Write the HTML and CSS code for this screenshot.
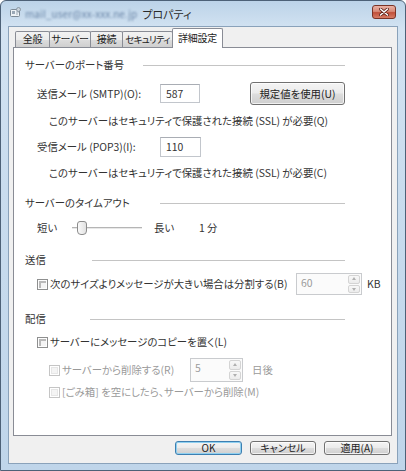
FILE: index.html
```html
<!DOCTYPE html>
<html lang="ja">
<head>
<meta charset="utf-8">
<title>プロパティ</title>
<link rel="stylesheet" href="styles.css">
</head>
<body>
<div class="window">
  <div class="titlebar">
    <svg class="app-icon" width="11" height="11" viewBox="0 0 11 11">
      <rect x="0.5" y="2.5" width="9" height="7" rx="1" fill="#eef2f5" stroke="#7d8a96"/>
      <rect x="2" y="4" width="3" height="3" fill="#9aa8b6"/>
      <rect x="6" y="4.5" width="3" height="1" fill="#9aa8b6"/>
      <rect x="6" y="6.5" width="2" height="1" fill="#9aa8b6"/>
      <circle cx="8.5" cy="2.5" r="2" fill="#c9d3dc" stroke="#7d8a96" stroke-width="0.8"/>
    </svg>
    <span class="title-blur">mail_user@xx-xxx.ne.jp</span>
    <span class="title-text">プロパティ</span>
    <span class="close-btn">
      <svg width="10" height="8" viewBox="0 0 10 8">
        <path d="M1.5 1 L8.5 7 M8.5 1 L1.5 7" stroke="#5a1e14" stroke-width="3" stroke-linecap="round"/>
        <path d="M1.5 1 L8.5 7 M8.5 1 L1.5 7" stroke="#ffffff" stroke-width="1.6" stroke-linecap="round"/>
      </svg>
    </span>
  </div>
  <div class="client">
    <div class="tabs">
      <div class="tab tab-general">全般</div>
      <div class="tab tab-server">サーバー</div>
      <div class="tab tab-conn">接続</div>
      <div class="tab tab-sec">セキュリティ</div>
      <div class="tab tab-adv active">詳細設定</div>
    </div>
    <div class="panel">
      <div class="group-head gh-port"><span class="gh-label">サーバーのポート番号</span><span class="gh-line"></span></div>
      <div class="row row-smtp">
        <span class="field-label">送信メール (SMTP)(O):</span>
        <span class="textbox tb-smtp">587</span>
        <span class="btn btn-port">規定値を使用(U)</span>
      </div>
      <div class="row row-ssl row-ssl-q">このサーバーはセキュリティで保護された接続 (SSL) が必要(Q)</div>
      <div class="row row-pop">
        <span class="field-label">受信メール (POP3)(I):</span>
        <span class="textbox tb-pop">110</span>
      </div>
      <div class="row row-ssl row-ssl-c">このサーバーはセキュリティで保護された接続 (SSL) が必要(C)</div>

      <div class="group-head gh-timeout"><span class="gh-label">サーバーのタイムアウト</span><span class="gh-line"></span></div>
      <div class="row row-slider">
        <span class="sl-short">短い</span>
        <span class="slider"><span class="sl-track"></span><span class="sl-thumb"></span></span>
        <span class="sl-long">長い</span>
        <span class="sl-value">1 分</span>
      </div>

      <div class="group-head gh-send"><span class="gh-label">送信</span><span class="gh-line"></span></div>
      <div class="row row-split">
        <span class="checkbox"></span>
        <span class="split-label">次のサイズよりメッセージが大きい場合は分割する(B)</span>
        <span class="spin spin-kb"><span class="spin-val">60</span><span class="spin-btns"><span class="spin-up"></span><span class="spin-down"></span></span></span>
        <span class="unit-kb">KB</span>
      </div>

      <div class="group-head gh-deliver"><span class="gh-label">配信</span><span class="gh-line"></span></div>
      <div class="row row-copy">
        <span class="checkbox"></span>
        <span>サーバーにメッセージのコピーを置く(L)</span>
      </div>
      <div class="row row-delete disabled">
        <span class="checkbox off"></span>
        <span class="delete-label">サーバーから削除する(R)</span>
        <span class="spin spin-days"><span class="spin-val">5</span><span class="spin-btns"><span class="spin-up"></span><span class="spin-down"></span></span></span>
        <span class="unit-days">日後</span>
      </div>
      <div class="row row-trash disabled">
        <span class="checkbox off"></span>
        <span>[ごみ箱] を空にしたら、サーバーから削除(M)</span>
      </div>
    </div>
    <div class="buttons">
      <span class="btn btn-dlg btn-ok">OK</span>
      <span class="btn btn-dlg">キャンセル</span>
      <span class="btn btn-dlg">適用(A)</span>
    </div>
  </div>
</div>
</body>
</html>
```

FILE: styles.css
```css
* { box-sizing: border-box; }
html, body { margin: 0; padding: 0; background: #ffffff; }
body {
  font-family: "Noto Sans CJK JP", "Noto Sans", sans-serif;
  font-size: 10.4px;
  font-feature-settings: "palt";
  color: #333333;
  line-height: 14px;
}
.window {
  width: 406px;
  height: 471px;
  border: 1px solid #4d6177;
  border-radius: 6px 6px 0 0;
  background: linear-gradient(to bottom, #bcd3e8 0%, #d3e3f2 6%, #c9dcee 40%, #bfd5ea 100%);
  padding: 0 7px 6px 7px;
  display: flex;
  flex-direction: column;
}
.titlebar {
  height: 25px;
  display: flex;
  align-items: center;
  padding-left: 2px;
}
.app-icon { flex: none; margin-top: -2px; }
.title-blur {
  margin-left: 4px;
  color: #6a86a8;
  filter: blur(1.1px);
  font-size: 10px;
  letter-spacing: 0.1px;
  white-space: nowrap;
}
.title-text {
  margin-left: 5px;
  color: #2a2a2a;
  font-size: 11px;
}
.close-btn {
  margin-left: auto;
  margin-right: 2px;
  margin-top: -4px;
  width: 24px;
  height: 14px;
  border: 1px solid #7a3326;
  border-radius: 3px;
  background: linear-gradient(to bottom, #eab1a4 0%, #d88a78 45%, #c0503b 55%, #d77c66 100%);
  display: flex;
  align-items: center;
  justify-content: center;
}
.client {
  flex: 1;
  border: 1px solid #8aa2ba;
  background: #f0f0f0;
  display: flex;
  flex-direction: column;
}
.tabs {
  height: 20px;
  display: flex;
  align-items: flex-end;
  padding-left: 6px;
}
.tab {
  height: 16px;
  border: 1px solid #898c95;
  border-bottom: none;
  margin-right: -1px;
  background: linear-gradient(to bottom, #f2f2f2 0%, #ebebeb 50%, #dddddd 51%, #cfcfcf 100%);
  border-radius: 2px 2px 0 0;
  line-height: 14px;
  font-size: 10px;
  color: #222;
  text-align: center;
  white-space: nowrap;
  letter-spacing: -0.3px;
}
.tab-general { width: 35px; }
.tab-server { width: 42px; }
.tab-conn { width: 33px; }
.tab-sec { width: 51px; font-size: 9.5px; letter-spacing: -0.8px; }
.tab-adv { width: 51px; }
.tab.active {
  height: 20px;
  margin-bottom: -1px;
  background: #ffffff;
  position: relative;
  z-index: 1;
  padding-top: 1px;
  line-height: 15px;
}
.panel {
  height: 389px;
  margin: 0 5px 0 4px;
  background: #ffffff;
  border: 1px solid #898c95;
  padding: 10px 0 0 11px;
}
.group-head {
  width: 320px;
  height: 14px;
  display: flex;
  align-items: center;
}
.gh-label { flex: none; }
.gh-line { flex: 1; height: 1px; background: #c4c4c4; }
.gh-port .gh-label { width: 118px; }
.gh-timeout .gh-label { width: 135px; }
.gh-send .gh-label { width: 67px; }
.gh-deliver .gh-label { width: 65px; }
.gh-timeout { margin-top: 16px; }
.gh-send { margin-top: 17px; }
.gh-deliver { margin-top: 17px; }

.row { display: flex; align-items: center; margin-left: 12px; white-space: nowrap; }
.row-smtp { height: 23px; margin-top: 10px; }
.row-ssl { height: 14px; margin-left: 24px; }
.row-ssl-q { margin-top: 9px; }
.row-pop { height: 20px; margin-top: 9px; }
.row-ssl-c { margin-top: 9px; }
.field-label { width: 123px; flex: none; }
.textbox {
  height: 19px;
  width: 40px;
  border: 1px solid #c2c6cc;
  border-top-color: #a9adb4;
  padding-left: 5px;
  line-height: 17px;
  background: #fff;
}
.tb-pop { height: 20px; width: 41px; line-height: 18px; }

.btn {
  display: flex;
  align-items: center;
  justify-content: center;
  border: 1px solid #707070;
  border-radius: 3px;
  background: linear-gradient(to bottom, #f4f4f4 0%, #ebebeb 48%, #dddddd 52%, #cfcfcf 100%);
  box-shadow: inset 0 0 0 1px rgba(255,255,255,0.7);
  color: #222;
}
.btn-port { width: 95px; height: 23px; margin-left: 50px; }

.row-slider { height: 16px; margin-top: 10px; }
.sl-short { width: 35px; flex: none; }
.slider { position: relative; width: 70px; height: 16px; flex: none; }
.sl-track {
  position: absolute; left: 0; right: 0; top: 7px; height: 2px;
  background: #b5b5b5; border-bottom: 1px solid #e8e8e8;
}
.sl-thumb {
  position: absolute; left: 5px; top: 1px; width: 10px; height: 14px;
  border: 1px solid #8c8c8c; border-radius: 3px 3px 4px 4px;
  background: linear-gradient(to right, #fafafa, #e2e2e2);
}
.sl-long { margin-left: 12px; width: 45px; flex: none; }

.row-split { height: 22px; margin-top: 6px; }
.checkbox {
  flex: none;
  width: 11px; height: 11px;
  border: 1px solid #8e8f8f;
  background: #f4f4f4;
  box-shadow: inset 0 0 0 1px #fdfdfd, inset 1px 1px 0 2px #b9b9b9;
  margin-right: 2px;
}
.checkbox.off {
  border-color: #c5c5c5;
  box-shadow: inset 0 0 0 1px #fff, inset 0 0 0 2px #e6e6e6;
}
.split-label { width: 246px; flex: none; }
.spin {
  display: flex;
  border: 1px solid #c9cbce;
  background: #fbfbfb;
  color: #9a9a9a;
}
.spin-kb { width: 66px; height: 22px; }
.spin-days { width: 53px; height: 24px; }
.spin-val { flex: 1; padding-left: 4px; line-height: 18px; }
.spin-btns { width: 13px; display: flex; flex-direction: column; padding: 1px 1px 1px 0; gap: 1px; }
.spin-up, .spin-down {
  flex: 1;
  border: 1px solid #d4d4d4;
  border-radius: 2px;
  background: linear-gradient(#f8f8f8, #ececec);
  position: relative;
}
.spin-up::after, .spin-down::after {
  content: "";
  position: absolute; left: 50%; top: 50%;
  margin-left: -2px; margin-top: -1px;
  border-left: 2px solid transparent; border-right: 2px solid transparent;
}
.spin-up::after { border-bottom: 3px solid #b0b0b0; margin-top: -2px; }
.spin-down::after { border-top: 3px solid #b0b0b0; }
.unit-kb { margin-left: 5px; }

.row-copy { height: 14px; margin-top: 9px; }
.row-delete { height: 24px; margin-top: 9px; margin-left: 24px; }
.row-trash { height: 14px; margin-top: 3px; margin-left: 24px; }
.disabled { color: #9a9a9a; }
.delete-label { width: 128px; flex: none; }
.unit-days { margin-left: 9px; }

.buttons {
  display: flex;
  justify-content: flex-end;
  gap: 8px;
  padding: 5px 7px 0 0;
}
.btn-dlg { width: 66px; height: 14px; font-size: 10px; line-height: 12px; }
.btn-ok {
  width: 67px;
  border-color: #3c7fb1;
  box-shadow: inset 0 0 0 1px #8fd0f0;
}
```
